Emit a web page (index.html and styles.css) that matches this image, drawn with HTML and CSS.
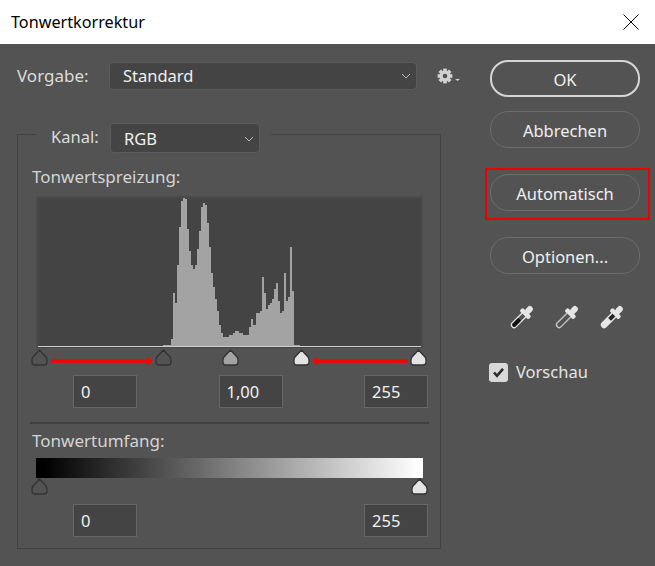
FILE: index.html
```html
<!DOCTYPE html>
<html lang="de">
<head>
    <meta charset="UTF-8">
    <meta name="viewport" content="width=device-width, initial-scale=1.0">
    <title>Tonwertkorrektur</title>
    <link rel="stylesheet" href="styles.css">
</head>
<body>
    <svg class="defs" width="0" height="0">
        <symbol id="thumb" viewBox="0 0 17 17">
            <path d="M8.5 1 15 8Q16 9.3 16 11V13Q16 16 13 16H4Q1 16 1 13V11Q1 9.3 2 8Z"/>
        </symbol>
        <symbol id="chevron" viewBox="0 0 10 6">
            <path d="M1 1 5 5 9 1" fill="none" stroke="#b8b8b8"/>
        </symbol>
    </svg>

    <div class="titlebar">
        <span>Tonwertkorrektur</span>
        <svg class="close" width="16" height="16" viewBox="0 0 16 16">
            <path d="M0.5 0.5 15.5 15.5M15.5 0.5 0.5 15.5" stroke="#000" fill="none"/>
        </svg>
    </div>

    <div class="dialog">
        <div class="left">
            <div class="preset">
                <label class="preset-label">Vorgabe:</label>
                <div class="select select-preset">
                    <span>Standard</span>
                    <svg class="chevron"><use href="#chevron"/></svg>
                </div>
                <svg class="gear" width="24" height="16" viewBox="0 0 24 16">
                    <g fill="#d2d2d2">
                        <circle cx="8" cy="8" r="5.4"/>
                        <rect x="6.2" y="0.6" width="3.6" height="14.8"/>
                        <rect x="6.2" y="0.6" width="3.6" height="14.8" transform="rotate(45 8 8)"/>
                        <rect x="6.2" y="0.6" width="3.6" height="14.8" transform="rotate(90 8 8)"/>
                        <rect x="6.2" y="0.6" width="3.6" height="14.8" transform="rotate(135 8 8)"/>
                        <path d="M18 11H23L20.5 13Z"/>
                    </g>
                    <circle cx="8" cy="8" r="2.3" fill="#535353"/>
                </svg>
            </div>

            <div class="levels">
                <div class="channel">
                    <label class="channel-label">Kanal:</label>
                    <div class="select select-channel">
                        <span>RGB</span>
                        <svg class="chevron"><use href="#chevron"/></svg>
                    </div>
                </div>

                <div class="section-label label-input">Tonwertspreizung:</div>
                <div class="histogram">
                    <svg width="383" height="150" viewBox="0 0 383 150">
                        <path fill="#a3a3a3" d="M125 149V147H133V141H135V95H137V105H139V67H141V29H143V3H145V0H147V1H149V31H151V53H153V67H155V71H157V67H159V51H161V33H163V9H165V5H167V7H169V25H171V49H173V75H175V89H177V101H179V113H181V127H183V135H185V139H191V137H195V135H197V133H201V135H205V137H211V129H213V121H215V127H218V115H222V113H224V79H226V95H228V111H230V107H232V105H234V101H236V91H238V85H240V103H242V115H244V113H246V75H248V103H250V99H252V49H254V93H256V147H262V149Z"/>
                        <rect x="0" y="148" width="383" height="1" fill="#cfcfcf"/>
                    </svg>
                </div>
                <div class="track track-input">
                    <svg class="thumb thumb-dark in-black"><use href="#thumb"/></svg>
                    <svg class="arrow arrow-right" width="102" height="10" viewBox="0 0 102 10">
                        <path d="M0 3.2H97V1L102 5 97 9V6.8H0Z" fill="#f00"/>
                    </svg>
                    <svg class="thumb thumb-dark in-black-moved"><use href="#thumb"/></svg>
                    <svg class="thumb thumb-gray in-gamma"><use href="#thumb"/></svg>
                    <svg class="thumb thumb-light in-white-moved"><use href="#thumb"/></svg>
                    <svg class="arrow arrow-left" width="96" height="10" viewBox="0 0 96 10">
                        <path d="M96 3.2H5V1L0 5 5 9V6.8H96Z" fill="#f00"/>
                    </svg>
                    <svg class="thumb thumb-light in-white"><use href="#thumb"/></svg>
                </div>
                <div class="fields">
                    <div class="field">0</div>
                    <div class="field">1,00</div>
                    <div class="field">255</div>
                </div>

                <div class="divider"></div>

                <div class="section-label label-output">Tonwertumfang:</div>
                <div class="gradient"></div>
                <div class="track track-output">
                    <svg class="thumb thumb-dark out-black"><use href="#thumb"/></svg>
                    <svg class="thumb thumb-light out-white"><use href="#thumb"/></svg>
                </div>
                <div class="fields">
                    <div class="field">0</div>
                    <div class="field">255</div>
                </div>
            </div>
        </div>

        <div class="right">
            <button class="btn btn-default">OK</button>
            <button class="btn btn-cancel">Abbrechen</button>
            <div class="marked">
                <button class="btn">Automatisch</button>
            </div>
            <button class="btn btn-options">Optionen...</button>

            <div class="droppers">
                <svg width="24" height="24" viewBox="0 0 24 24">
                    <g transform="rotate(45 12 12)">
                        <rect x="9" y="-3.5" width="6" height="8" rx="2.6" fill="#e6e6e6"/>
                        <rect x="5.8" y="3.5" width="12.4" height="4.6" rx="1.6" fill="#e6e6e6"/>
                        <path d="M8.6 8H15.4V21.5Q15.4 25 12 25T8.6 21.5Z" fill="#e6e6e6"/>
                        <path d="M10 8H14V21.5Q14 23.6 12 23.6T10 21.5Z" fill="#535353"/>
                        <path d="M10 14H14V21.5Q14 23.6 12 23.6T10 21.5Z" fill="#111"/>
                    </g>
                </svg>
                <svg width="24" height="24" viewBox="0 0 24 24">
                    <g transform="rotate(45 12 12)">
                        <rect x="9" y="-3.5" width="6" height="8" rx="2.6" fill="#e6e6e6"/>
                        <rect x="5.8" y="3.5" width="12.4" height="4.6" rx="1.6" fill="#e6e6e6"/>
                        <path d="M8.6 8H15.4V21.5Q15.4 25 12 25T8.6 21.5Z" fill="#c4c4c4"/>
                        <path d="M10 8H14V21.5Q14 23.6 12 23.6T10 21.5Z" fill="#535353"/>
                    </g>
                </svg>
                <svg width="24" height="24" viewBox="0 0 24 24">
                    <g transform="rotate(45 12 12)">
                        <rect x="9" y="-3.5" width="6" height="8" rx="2.6" fill="#e6e6e6"/>
                        <rect x="5.8" y="3.5" width="12.4" height="4.6" rx="1.6" fill="#e6e6e6"/>
                        <path d="M8.6 8H15.4V21.5Q15.4 25 12 25T8.6 21.5Z" fill="#e6e6e6"/>
                        <rect x="10" y="8" width="4" height="6" fill="#222"/>
                    </g>
                </svg>
            </div>

            <div class="preview">
                <span class="checkbox">
                    <svg width="19" height="19" viewBox="0 0 19 19">
                        <path d="M5 9.5 8 12.8 14 5.8" fill="none" stroke="#2c2c2c" stroke-width="2.6"/>
                    </svg>
                </span>
                <label>Vorschau</label>
            </div>
        </div>
    </div>
</body>
</html>
```

FILE: styles.css
```css
* { box-sizing: border-box; }
html, body { margin: 0; padding: 0; }
body { width: 655px; height: 566px; overflow: hidden; background: #535353; color: #dcdcdc; font-family: "Noto Sans", "Open Sans", sans-serif; font-size: 16.5px; line-height: 20px; }
.defs { position: absolute; }

.titlebar { height: 44px; background: #fff; color: #000; font-size: 16.2px; padding: 0 16px 0 11px; display: flex; align-items: center; justify-content: space-between; }
.dialog { display: flex; }
.left { width: 441px; padding-top: 18px; }
.right { width: 150px; margin-left: 49px; padding-top: 16px; display: flex; flex-direction: column; }

.preset { display: flex; align-items: center; height: 28px; padding-left: 17px; }
.preset-label { flex: none; width: 92px; font-size: 17px; }
.gear { flex: none; margin-left: 20px; }

.select { flex: none; background: #444; border: 1px solid #5b5b5b; border-radius: 4px; color: #efefef; display: flex; align-items: center; justify-content: space-between; padding: 0 5px 0 13px; }
.select-preset { width: 308px; height: 28px; }
.select-channel { width: 150px; height: 30px; padding-top: 1px; }
.chevron { width: 10px; height: 6px; }

.levels { width: 424px; height: 415px; margin: 44px 0 0 17px; border: 1px solid #424242; }
.channel { width: 235px; height: 30px; margin: -12px 0 0 18px; padding-left: 15px; background: #535353; display: flex; align-items: flex-start; }
.channel-label { width: 59px; margin-top: 4px; }

.section-label { padding-left: 14px; color: #d4d4d4; font-size: 17px; }
.label-input { margin-top: 14px; }
.label-output { margin-top: 7px; }

.histogram { width: 387px; height: 152px; margin: 9px 0 0 18px; background: #444; border: 2px solid #4b4b4b; border-bottom: 0; }
.histogram svg { display: block; }

.track { position: relative; }
.track-input { height: 27px; }
.track-output { height: 26px; }
.thumb { position: absolute; width: 17px; height: 17px; stroke: #333; stroke-width: 1.3; }
.thumb-dark { fill: none; }
.thumb-gray { fill: #a3a3a3; }
.thumb-light { fill: #e4e4e4; }
.track-input .thumb { top: 1px; }
.track-output .thumb { top: 0; }
.in-black { left: 13px; }
.in-black-moved { left: 137px; }
.in-gamma { left: 204px; }
.in-white-moved { left: 275px; }
.in-white { left: 392px; }
.out-black { left: 13px; }
.out-white { left: 393px; }
.arrow { position: absolute; top: 8px; }
.arrow-right { left: 33px; }
.arrow-left { left: 294px; }

.fields { display: flex; justify-content: space-between; padding: 0 12px 0 55px; }
.field { width: 64px; height: 33px; background: #444; border: 1px solid #666; color: #f2f2f2; padding: 6px 0 0 7px; }

.divider { height: 2px; margin: 14px 11px 0 12px; background: #3f3f3f; }
.gradient { width: 387px; height: 20px; margin: 7px 0 0 18px; background: linear-gradient(to right, #000 2%, #fff 99%); }

.btn { display: block; width: 150px; height: 37px; padding: 2px 0 0; background: transparent; border: 1px solid #6c6c6c; border-radius: 18px; color: #efefef; font: inherit; }
.btn-default { border: 2px solid #d6d6d6; }
.btn-cancel { margin-top: 14px; }
.btn-options { margin-top: 26px; }
.marked { position: relative; margin-top: 26px; }
.marked::after { content: ""; position: absolute; left: -5px; top: -6px; width: 161px; height: 48px; border: 2px solid #ee0000; }

.droppers { display: flex; gap: 21px; margin-top: 32px; padding-left: 19px; }
.droppers svg { overflow: visible; }
.preview { display: flex; align-items: center; margin: 32px 0 0 -1px; }
.preview label { margin-left: 8px; color: #e4e4e4; }
.checkbox { width: 19px; height: 19px; background: #d8d8d8; border-radius: 3px; }
.checkbox svg { display: block; }
```
